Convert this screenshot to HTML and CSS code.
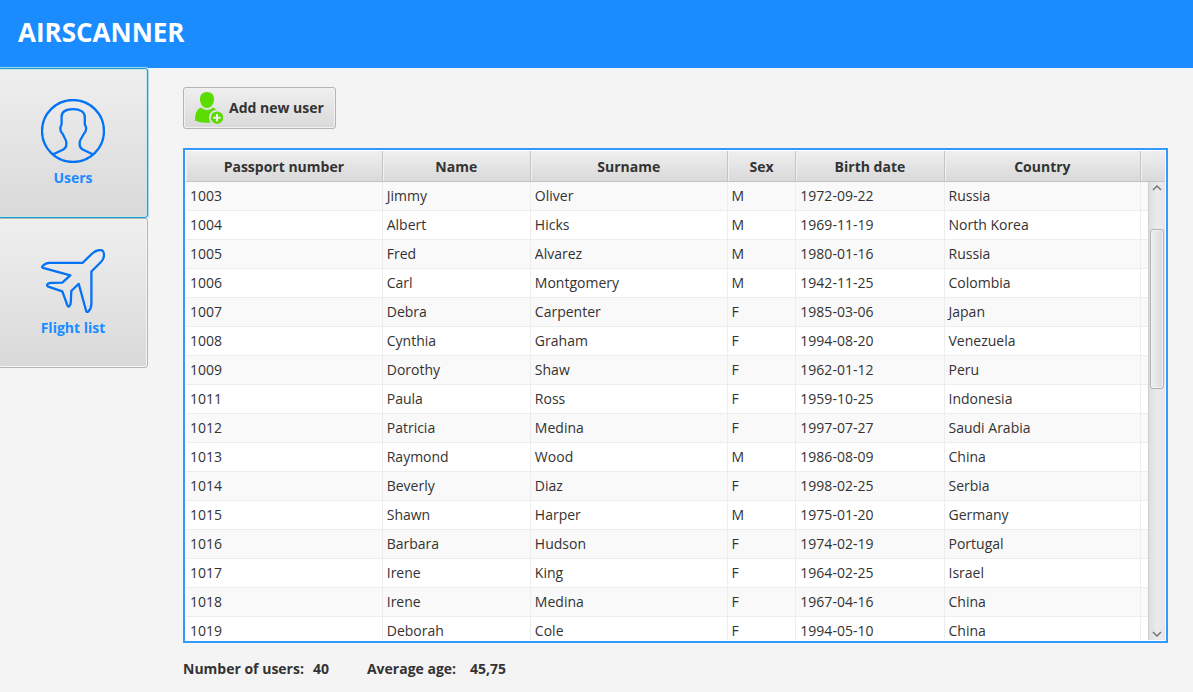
FILE: index.html
```html
<!DOCTYPE html>
<html lang="en">
<head>
<meta charset="utf-8">
<meta name="viewport" content="width=device-width, initial-scale=1">
<title>Airscanner</title>
<link rel="stylesheet" href="styles.css">
</head>
<body>
<header class="topbar"><h1 class="brand">AIRSCANNER</h1></header>
<div class="layout">
  <nav class="sidebar">
    <button type="button" class="nav-button nav-button-active">
      <svg class="nav-icon" viewBox="0 0 64 64" aria-hidden="true">
        <circle cx="32" cy="32" r="31"/>
        <path d="M12.3 55.3L22.3 50.5Q25.3 48.6 25.3 46V43C25.3 41 22.8 38 21.8 35.2C20.5 34 19.3 32 19.3 29.5C19.3 27 20.6 27 20.6 25V18C20.6 13 25 10.2 32 10.2S43.8 13 43.8 18V25C43.8 27 45.2 27 45.2 29.5C45.2 32 43.8 34 42.6 35.2C41.5 38 38.7 41 38.7 43V46Q38.7 48.6 41.7 50.5L51.7 55.3"/>
      </svg>
      <span>Users</span>
    </button>
    <button type="button" class="nav-button">
      <svg class="nav-icon" viewBox="0 0 64 64" aria-hidden="true">
        <path d="M41.7 13.8L50.7 5C54 2 56.5 1 59 1C62.5 1 63 3 63 6.5C63 9.5 62 11 59.7 13.3L50.4 22.5V55C50.4 59 49 60.8 47.2 62.6C46.2 63.4 45.4 63 45.1 61.8L37.7 34.8L30.3 42L29.8 53C29.8 55.5 29.2 56.8 28 57.6C27.2 57.9 26.8 57.3 26.5 56.6L21.3 42.3L7.2 37.6C5.8 37 5.8 35.8 6.8 34.8C7.8 34 9 33.8 10.5 33.8L21.3 33.6L29.3 26.3L2 18.8C0.8 18.4 0.8 17.6 1.8 16.8C3.6 14.8 5.4 13.8 8.5 13.8Z"/>
      </svg>
      <span>Flight list</span>
    </button>
  </nav>
  <main class="content">
    <button type="button" class="add-button">
      <svg class="add-icon" viewBox="0 0 28 32" aria-hidden="true">
        <path d="M12 0C16.5 0 19 3 19 7C19 12 16 16 12 16S5 12 5 7C5 3 7.500 0 12 0Z"/>
        <path d="M6 15.500Q12 20.500 18 15.500Q20 16.200 21.500 17.800C17 18 14 21.500 14 25.500Q14 28.500 15.500 30.500Q6 31.500 0 28.500Q0 17.500 6 15.500Z"/>
        <circle cx="22" cy="25.700" r="6.200"/>
        <path class="add-plus" d="M22 22V29.400M18.300 25.700H25.700"/>
      </svg>
      <span>Add new user</span>
    </button>
    <section class="grid" aria-label="Users">
      <div class="grid-scroll">
        <table class="users">
          <colgroup><col class="col-wide"><col class="col-mid"><col class="col-wide"><col class="col-sex"><col class="col-mid"><col class="col-wide"><col></colgroup>
          <thead><tr><th>Passport number</th><th>Name</th><th>Surname</th><th>Sex</th><th>Birth date</th><th>Country</th><td></td></tr></thead>
          <tbody>
            <tr><td>1003</td><td>Jimmy</td><td>Oliver</td><td>M</td><td>1972-09-22</td><td>Russia</td><td></td></tr>
            <tr><td>1004</td><td>Albert</td><td>Hicks</td><td>M</td><td>1969-11-19</td><td>North Korea</td><td></td></tr>
            <tr><td>1005</td><td>Fred</td><td>Alvarez</td><td>M</td><td>1980-01-16</td><td>Russia</td><td></td></tr>
            <tr><td>1006</td><td>Carl</td><td>Montgomery</td><td>M</td><td>1942-11-25</td><td>Colombia</td><td></td></tr>
            <tr><td>1007</td><td>Debra</td><td>Carpenter</td><td>F</td><td>1985-03-06</td><td>Japan</td><td></td></tr>
            <tr><td>1008</td><td>Cynthia</td><td>Graham</td><td>F</td><td>1994-08-20</td><td>Venezuela</td><td></td></tr>
            <tr><td>1009</td><td>Dorothy</td><td>Shaw</td><td>F</td><td>1962-01-12</td><td>Peru</td><td></td></tr>
            <tr><td>1011</td><td>Paula</td><td>Ross</td><td>F</td><td>1959-10-25</td><td>Indonesia</td><td></td></tr>
            <tr><td>1012</td><td>Patricia</td><td>Medina</td><td>F</td><td>1997-07-27</td><td>Saudi Arabia</td><td></td></tr>
            <tr><td>1013</td><td>Raymond</td><td>Wood</td><td>M</td><td>1986-08-09</td><td>China</td><td></td></tr>
            <tr><td>1014</td><td>Beverly</td><td>Diaz</td><td>F</td><td>1998-02-25</td><td>Serbia</td><td></td></tr>
            <tr><td>1015</td><td>Shawn</td><td>Harper</td><td>M</td><td>1975-01-20</td><td>Germany</td><td></td></tr>
            <tr><td>1016</td><td>Barbara</td><td>Hudson</td><td>F</td><td>1974-02-19</td><td>Portugal</td><td></td></tr>
            <tr><td>1017</td><td>Irene</td><td>King</td><td>F</td><td>1964-02-25</td><td>Israel</td><td></td></tr>
            <tr><td>1018</td><td>Irene</td><td>Medina</td><td>F</td><td>1967-04-16</td><td>China</td><td></td></tr>
            <tr><td>1019</td><td>Deborah</td><td>Cole</td><td>F</td><td>1994-05-10</td><td>China</td><td></td></tr>
          </tbody>
        </table>
      </div>
      <div class="scroll-side">
        <div class="scroll-cap"></div>
        <div class="scrollbar">
          <button type="button" class="scroll-arrow" aria-label="Scroll up"><svg viewBox="0 0 10 6" aria-hidden="true"><path d="M1 5L5 1L9 5"/></svg></button>
          <div class="scroll-track"><div class="scroll-thumb"></div></div>
          <button type="button" class="scroll-arrow" aria-label="Scroll down"><svg viewBox="0 0 10 6" aria-hidden="true"><path d="M1 1L5 5L9 1"/></svg></button>
        </div>
      </div>
    </section>
    <footer class="summary">
      <p class="stat"><span>Number of users:</span><span>40</span></p>
      <p class="stat stat-age"><span>Average age:</span><span>45,75</span></p>
    </footer>
  </main>
</div>
</body>
</html>
```
FILE: styles.css
```css
* { box-sizing: border-box; }
body {
  margin: 0;
  height: 100vh;
  display: flex;
  flex-direction: column;
  background: #f4f4f4;
  color: #333;
  font: 14px/20px "Open Sans", "Noto Sans", sans-serif;
}
button { font: inherit; font-weight: 700; color: inherit; cursor: pointer; }
.topbar { background: #1a8cff; padding: 16px 18px 20px; }
.brand { margin: 0; color: #fff; font-size: 26px; line-height: 32px; font-weight: 700; }
.layout { flex: 1; min-height: 0; display: flex; }

.sidebar { width: 148px; flex: none; display: flex; flex-direction: column; }
.nav-button {
  display: flex;
  flex-direction: column;
  align-items: center;
  gap: 5px;
  height: 150px;
  margin-left: -2px;
  padding: 30px 0 0;
  border: 1px solid #b5b5b5;
  border-radius: 3px;
  background: linear-gradient(#efefef, #d9d9d9);
  box-shadow: inset 0 0 0 1px #f4f4f4;
  color: #1a8cff;
}
.nav-button-active {
  border-color: #1a9fce;
  box-shadow: inset 0 0 0 1px #cfe4ea, 0 0 1px 1px #a5dcee;
}
.nav-icon { width: 64px; height: 64px; fill: none; stroke: #0472f5; stroke-width: 2.3; stroke-linejoin: round; }

.content {
  flex: 1;
  min-width: 0;
  display: flex;
  flex-direction: column;
  align-items: flex-start;
  padding: 19px 25px 13px 35px;
}
.add-button {
  display: flex;
  align-items: center;
  gap: 6px;
  height: 42px;
  padding: 0 11px;
  margin-bottom: 19px;
  border: 1px solid #b5b5b5;
  border-radius: 3px;
  background: linear-gradient(#efefef, #d9d9d9);
  box-shadow: inset 0 0 0 1px #f1f1f1;
}
.add-icon { width: 28px; height: 32px; fill: #5bdc00; }
.add-plus { stroke: #f0f0f0; stroke-width: 2; }

.grid {
  flex: 1;
  min-height: 0;
  width: 100%;
  display: flex;
  padding: 1px;
  border: 2px solid #3399ff;
  background: #fff;
}
.grid-scroll { flex: 1; min-width: 0; overflow-y: auto; scrollbar-width: none; }
.users { width: 100%; table-layout: fixed; border-collapse: separate; border-spacing: 0; }
.col-wide { width: 20.45%; }
.col-mid { width: 15.4%; }
.col-sex { width: 7.15%; }
.users th, .users td { border-right: 1px solid #ededed; white-space: nowrap; overflow: hidden; }
.users tbody td { height: 29px; padding: 0 4px; text-align: left; border-bottom: 1px solid #ededed; }
.users tbody tr:nth-child(odd) { background: #f9f9f9; }
.users thead th, .users thead td {
  position: sticky;
  top: 0;
  height: 31px;
  padding: 2px 0 0;
  text-align: center;
  border-right-color: #c4c4c4;
  border-bottom: 1px solid #c4c4c4;
  background: linear-gradient(#efefef, #d9d9d9);
  box-shadow: inset 1px 1px #f1f1f1;
}
.users tr > :last-child, .users thead td { border-right: 0; }

.scroll-side { width: 17px; flex: none; display: flex; flex-direction: column; }
.scroll-cap { height: 31px; flex: none; border-bottom: 1px solid #c4c4c4; background: linear-gradient(#efefef, #d9d9d9); }
.scrollbar {
  flex: 1;
  min-height: 0;
  display: flex;
  flex-direction: column;
  border-left: 1px solid #cfcfcf;
  background: linear-gradient(90deg, #dedede, #ebebeb 50%, #e6e6e6);
}
.scroll-arrow { height: 12px; padding: 0; border: 0; background: none; display: flex; align-items: center; justify-content: center; }
.scroll-arrow svg { width: 10px; height: 6px; fill: none; stroke: #777; stroke-width: 1.5; }
.scroll-track { flex: 1; padding: 35px 1px 0; }
.scroll-thumb {
  height: 160px;
  border: 1px solid #b0b0b0;
  border-radius: 3px;
  background: linear-gradient(90deg, #f0f0f0, #dadada);
  box-shadow: inset 0 0 0 1px #f4f4f4;
}

.summary { display: flex; gap: 38px; padding-top: 16px; font-weight: 700; }
.stat { margin: 0; display: flex; gap: 9px; }
.stat-age { gap: 14px; }
```
